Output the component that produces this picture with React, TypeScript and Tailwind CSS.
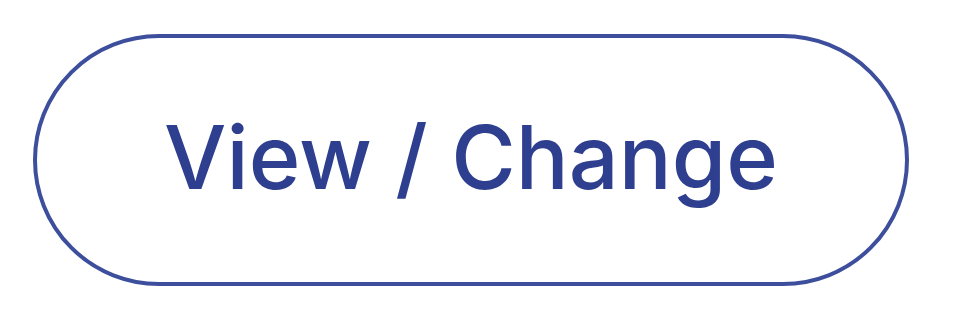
export default function App() {
  return (
    <div className="w-[960px] h-[322px] bg-white pt-[34px] pl-[33px]" style={{ fontFamily: 'Inter, "Liberation Sans", sans-serif' }}>
      <div className="w-[876px] h-[252px] rounded-full border-[4px] border-[#3d4f9c] flex items-center justify-center">
        <span className="text-[88px] font-medium text-[#2f3f8f] leading-none tracking-[0px] mb-[6px]">View / Change</span>
      </div>
    </div>
  );
}
